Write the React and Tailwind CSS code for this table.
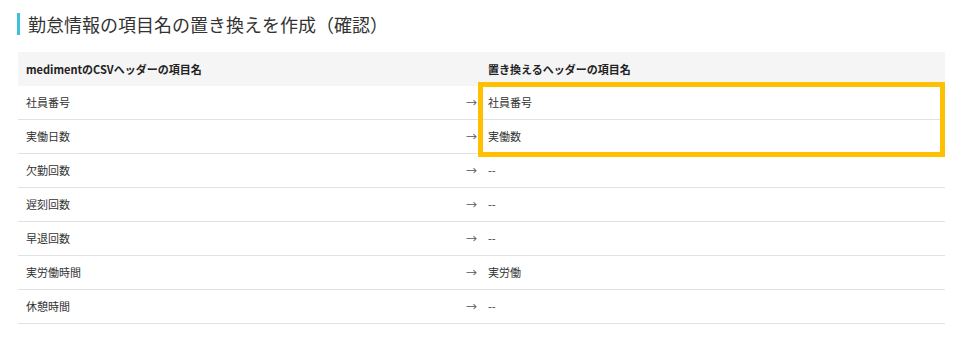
import React from "react";

const rows = [
  { from: "社員番号", to: "社員番号" },
  { from: "実働日数", to: "実働数" },
  { from: "欠勤回数", to: "--" },
  { from: "遅刻回数", to: "--" },
  { from: "早退回数", to: "--" },
  { from: "実労働時間", to: "実労働" },
  { from: "休憩時間", to: "--" },
];

export default function App() {
  return (
    <div
      className="w-[970px] h-[337px] bg-white text-[#333]"
      style={{ fontFamily: '"Noto Sans CJK JP", "Noto Sans", sans-serif' }}
    >
      {/* title */}
      <div className="flex items-center pt-[13px] pl-[17px]">
        <div className="w-[3px] h-[22px] bg-[#3fc1d9]"></div>
        <h1 className="ml-[8px] text-[18px] leading-[22px] text-[#333]">
          勤怠情報の項目名の置き換えを作成（確認）
        </h1>
      </div>

      {/* table */}
      <div className="relative ml-[18px] mt-[17px] w-[927px]">
        <div className="grid grid-cols-[461px_1fr] h-[34px] bg-[#f5f5f5] text-[11px] font-bold text-[#222]">
          <div className="flex items-center pl-[8px]">medimentのCSVヘッダーの項目名</div>
          <div className="flex items-center pl-[9px]">置き換えるヘッダーの項目名</div>
        </div>

        {rows.map((r, i) => (
          <div
            key={i}
            className="grid grid-cols-[461px_1fr] h-[34px] border-b border-[#e2e2e2] text-[11px]"
          >
            <div className="flex items-center justify-between pl-[8px] pr-[2px]">
              <span>{r.from}</span>
              <span className="text-[#555]">→</span>
            </div>
            <div className="flex items-center pl-[9px]">{r.to}</div>
          </div>
        ))}

        {/* highlight box */}
        <div className="absolute left-[460px] top-[30px] w-[467px] h-[75px] border-[5px] border-[#ffc000] pointer-events-none"></div>
      </div>
    </div>
  );
}
